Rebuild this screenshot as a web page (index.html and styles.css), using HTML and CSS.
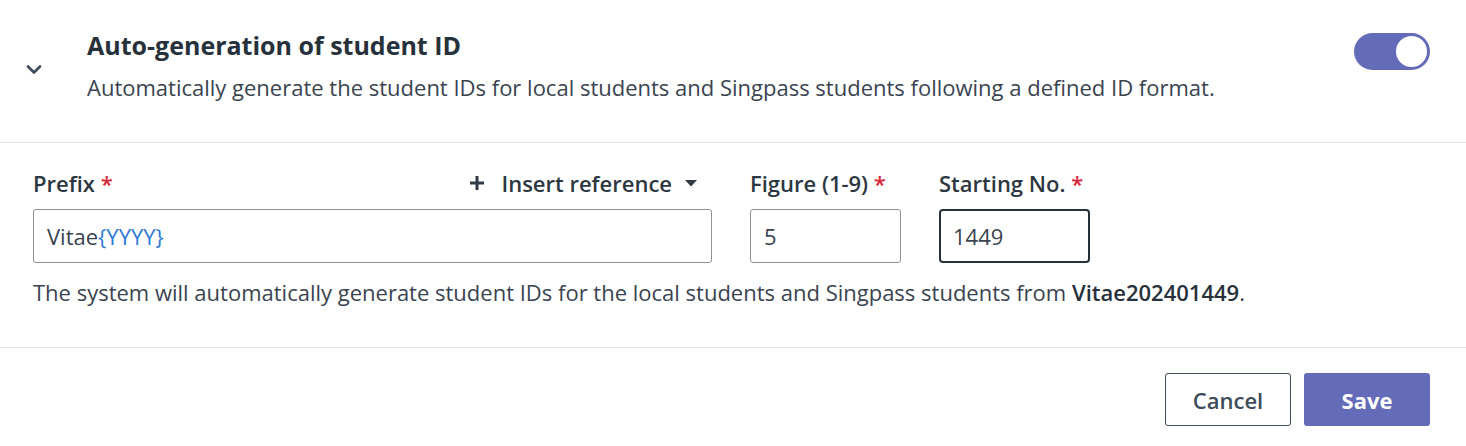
FILE: index.html
```html
<!DOCTYPE html>
<html lang="en">
<head>
<meta charset="utf-8">
<title>Auto-generation of student ID</title>
<link rel="stylesheet" href="styles.css">
</head>
<body>
<div class="panel">
  <div class="header">
    <div class="chevron">
      <svg width="20" height="12" viewBox="0 0 20 12"><path d="M4 2.5 L10 8.5 L16 2.5" fill="none" stroke="#3e4b5b" stroke-width="2.6" stroke-linecap="round" stroke-linejoin="round"/></svg>
    </div>
    <div class="header-text">
      <h2 class="title">Auto-generation of student ID</h2>
      <p class="desc">Automatically generate the student IDs for local students and Singpass students following a defined ID format.</p>
    </div>
    <div class="toggle"><span class="knob"></span></div>
  </div>

  <div class="form">
    <div class="fields">
      <div class="field field-prefix">
        <div class="label-row">
          <span class="label">Prefix <span class="req">*</span></span>
          <span class="insert">
            <svg class="plus" width="16" height="16" viewBox="0 0 16 16"><path d="M8 1v14M1 8h14" stroke="#2f3a45" stroke-width="3"/></svg>
            Insert reference
            <svg class="caret" width="14" height="10" viewBox="0 0 14 10"><path d="M1 2h12L7 8.5z" fill="#2f3a45"/></svg>
          </span>
        </div>
        <div class="input">Vitae<span class="ref">{YYYY}</span></div>
      </div>
      <div class="field field-small">
        <div class="label-row"><span class="label">Figure (1-9) <span class="req">*</span></span></div>
        <div class="input">5</div>
      </div>
      <div class="field field-small">
        <div class="label-row"><span class="label">Starting No. <span class="req">*</span></span></div>
        <div class="input focused">1449</div>
      </div>
    </div>
    <p class="help">The system will automatically generate student IDs for the local students and Singpass students from <strong>Vitae202401449</strong>.</p>
  </div>

  <div class="footer">
    <button class="btn btn-cancel">Cancel</button>
    <button class="btn btn-save">Save</button>
  </div>
</div>
</body>
</html>
```

FILE: styles.css
```css
* { box-sizing: border-box; }
body {
  margin: 0;
  background: #ffffff;
  font-family: "Open Sans", "Noto Sans", sans-serif;
  color: #3a4450;
}
.panel { width: 1466px; }

.header {
  display: flex;
  align-items: flex-start;
  padding: 30px 36px 40px 24px;
  border-bottom: 1px solid #e6e6e6;
}
.chevron {
  width: 20px;
  margin-top: 34px;
  margin-right: 43px;
  display: flex;
}
.header-text { flex: 1; }
.title {
  margin: 0;
  font-size: 25px;
  line-height: 30px;
  font-weight: 700;
  color: #27313b;
}
.desc {
  margin: 12px 0 0;
  font-size: 22px;
  line-height: 30px;
  color: #3a4450;
}
.toggle {
  width: 76px;
  height: 37px;
  margin-top: 3px;
  border-radius: 19px;
  background: #646bb8;
  display: flex;
  justify-content: flex-end;
  align-items: center;
  padding: 3px;
}
.knob {
  width: 31px;
  height: 31px;
  border-radius: 50%;
  background: #ffffff;
}

.form {
  padding: 26px 36px 40px 33px;
  border-bottom: 1px solid #e6e6e6;
}
.fields {
  display: flex;
  gap: 38px;
}
.field { display: flex; flex-direction: column; }
.field-prefix { width: 679px; }
.field-small { width: 151px; }
.label-row {
  display: flex;
  justify-content: space-between;
  align-items: center;
  height: 28px;
  margin-bottom: 12px;
}
.label {
  font-size: 22px;
  font-weight: 600;
  color: #2d3741;
  white-space: nowrap;
}
.req { color: #d92a3c; }
.insert {
  display: flex;
  align-items: center;
  font-size: 22px;
  font-weight: 600;
  color: #2d3741;
  margin-right: 14px;
}
.plus { margin-right: 16px; }
.caret { margin-left: 12px; }
.input {
  height: 54px;
  border: 1px solid #8c8f94;
  border-radius: 3px;
  padding: 0 13px;
  display: flex;
  align-items: center;
  font-size: 22px;
  color: #3a4450;
}
.input.focused {
  border: 2px solid #26303a;
  border-radius: 4px;
  padding: 0 12px;
}
.ref { color: #2f7ad3; }
.help {
  margin: 14px 0 0;
  font-size: 22px;
  line-height: 30px;
  color: #3a4450;
}
.help strong { font-weight: 600; color: #27313b; }

.footer {
  display: flex;
  justify-content: flex-end;
  gap: 13px;
  padding: 25px 36px 0 0;
}
.btn {
  width: 126px;
  height: 53px;
  border-radius: 3px;
  font-family: "Open Sans", "Noto Sans", sans-serif;
  font-size: 22px;
  line-height: 28px;
  padding: 0;
  cursor: pointer;
}
.btn-cancel {
  background: #ffffff;
  border: 1px solid #3e4b5b;
  color: #3e4b5b;
  font-weight: 600;
}
.btn-save {
  background: #646bb8;
  border: none;
  color: #ffffff;
  font-weight: 700;
}
```
